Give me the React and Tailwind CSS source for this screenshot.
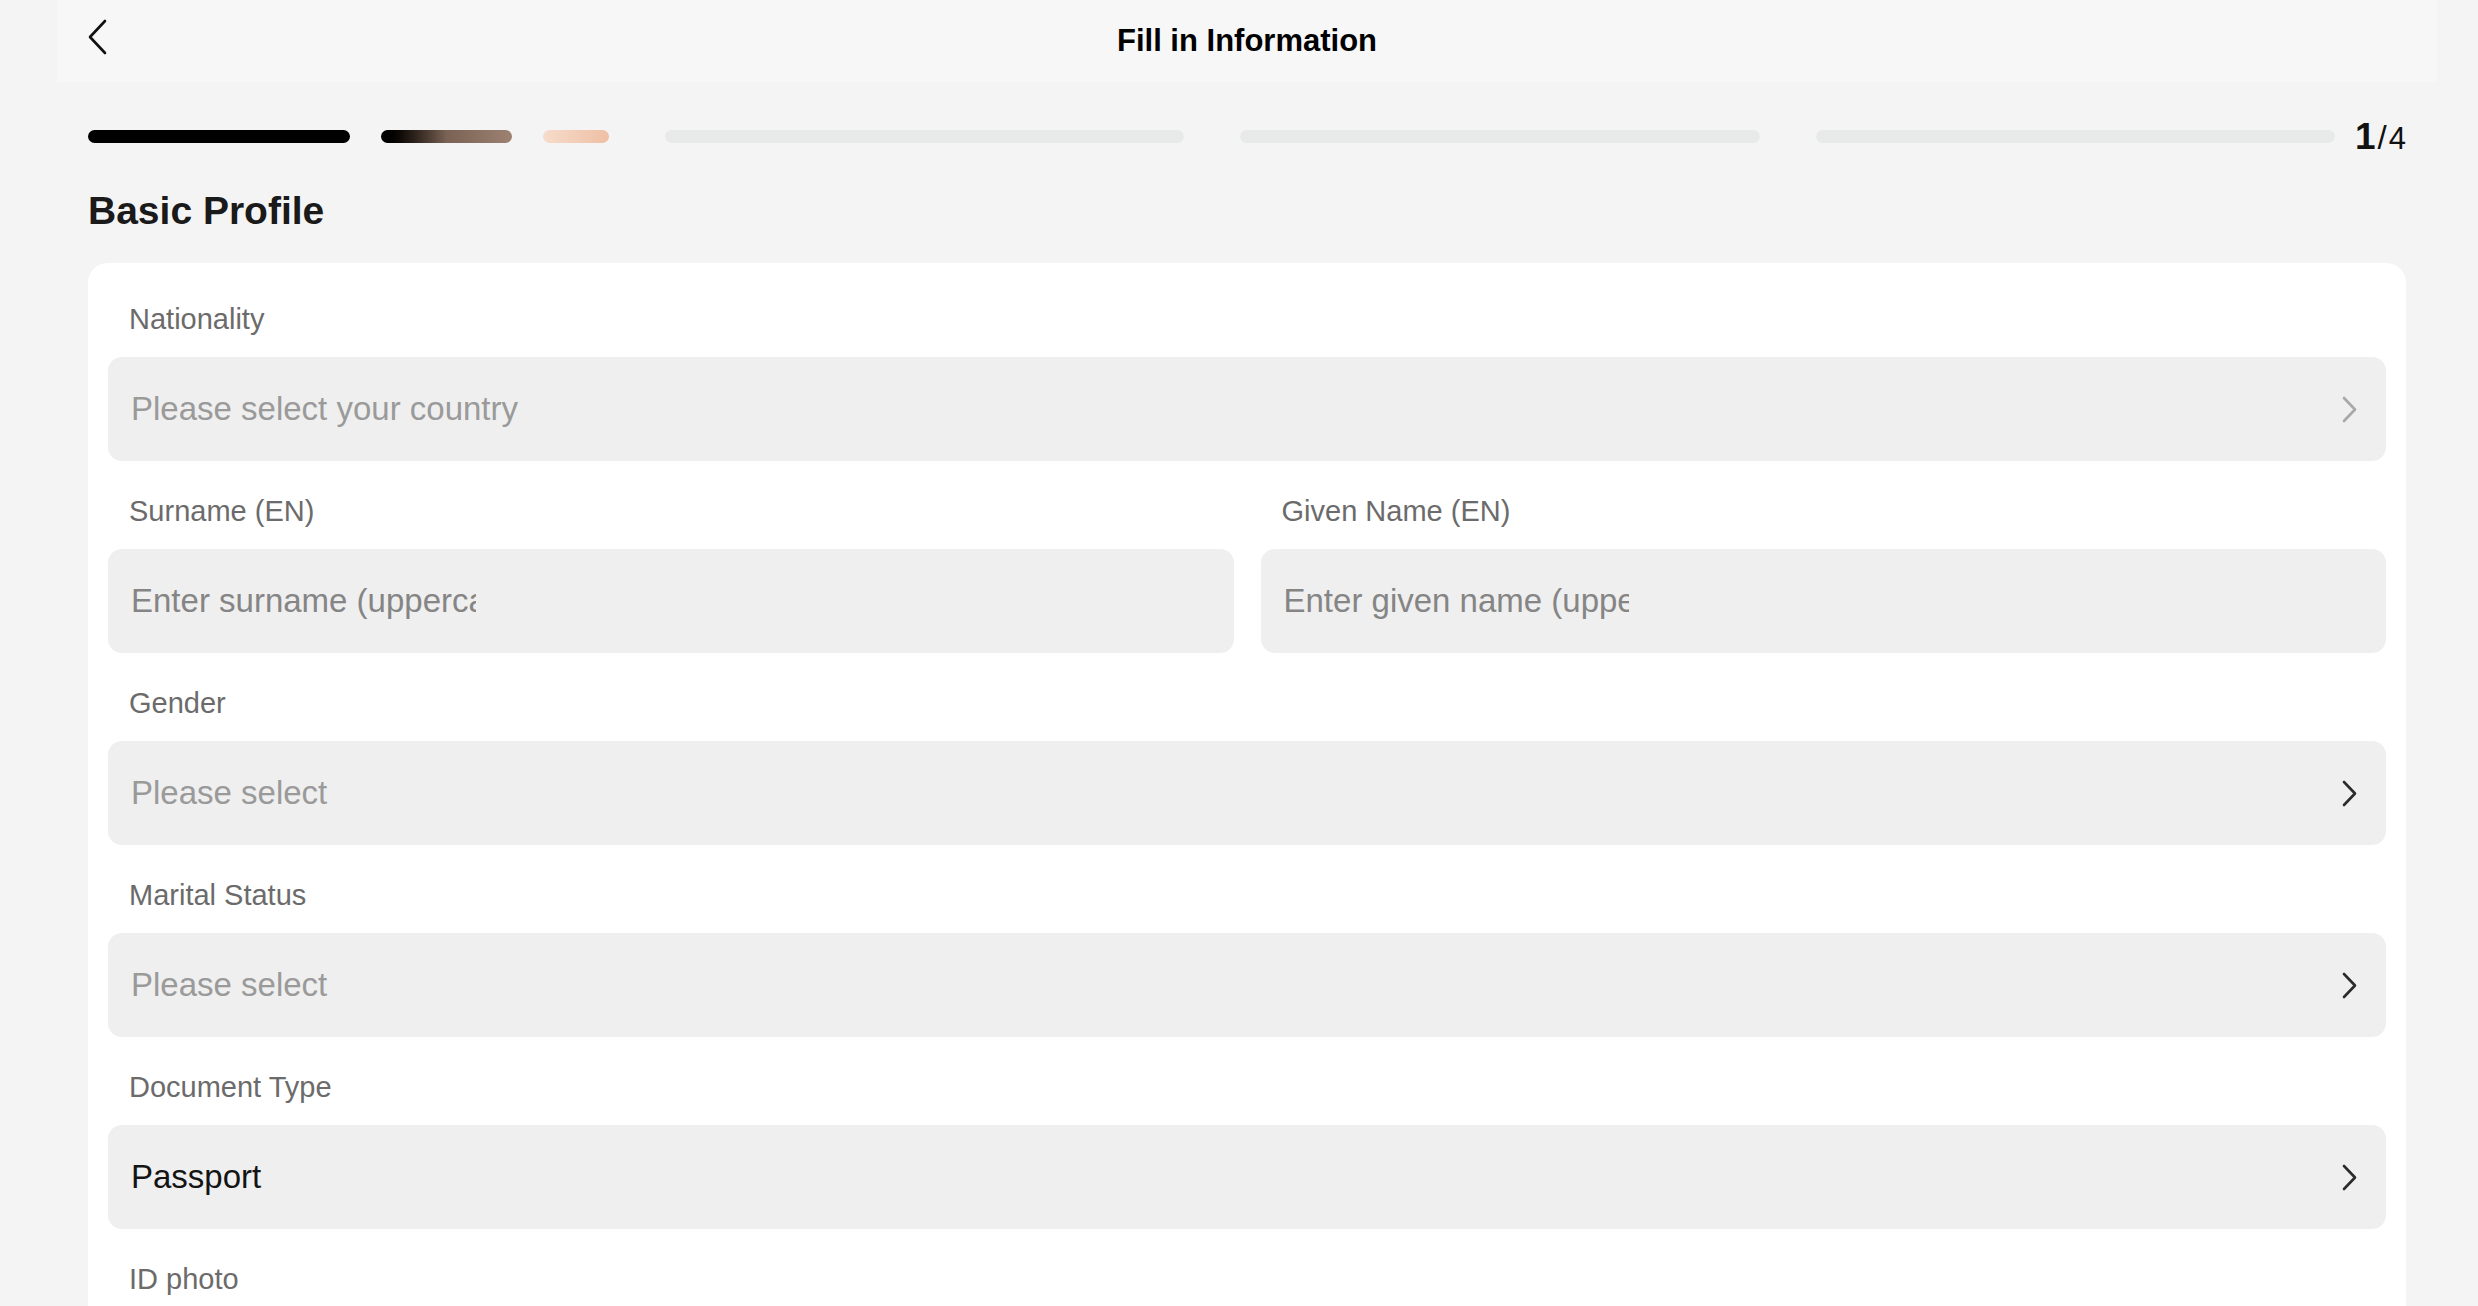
import { useState } from "react";

const FONT = { fontFamily: '"Liberation Sans", Arial, sans-serif' };

// chevrons drawn to match the thin strokes in the design
function BackIcon() {
  return (
    <svg width="20" height="36" viewBox="0 0 20 36" fill="none">
      <path d="M18 2 L3 18 L18 34" stroke="#111" strokeWidth="2.6" strokeLinecap="round" strokeLinejoin="round" />
    </svg>
  );
}

function ChevronRight({ color = "#2b2b2b" }) {
  return (
    <svg width="16" height="27" viewBox="0 0 16 27" fill="none">
      <path d="M2 2 L13 13.5 L2 25" stroke={color} strokeWidth="2.6" strokeLinecap="round" strokeLinejoin="round" />
    </svg>
  );
}

function Label({ children }) {
  return <div className="pl-[21px] text-[29px] leading-[40px] text-[#6b6b6b] mb-[18px]">{children}</div>;
}

function SelectField({ label, value, placeholder, muted }) {
  return (
    <div>
      <Label>{label}</Label>
      <div className="h-[104px] rounded-[14px] bg-[#efefef] flex items-center justify-between pl-[23px] pr-[28px] cursor-pointer">
        <span className={value ? "text-[33px] text-[#141414]" : "text-[33px] text-[#9a9a9a]"}>
          {value || placeholder}
        </span>
        <ChevronRight color={muted ? "#a8a8a8" : "#2b2b2b"} />
      </div>
    </div>
  );
}

function TextField({ label, placeholder }) {
  const [v, setV] = useState("");
  return (
    <div className="flex-1">
      <Label>{label}</Label>
      <div className="h-[104px] rounded-[14px] bg-[#efefef] flex items-center pl-[23px]">
        <input
          value={v}
          onChange={(e) => setV(e.target.value)}
          placeholder={placeholder}
          className="w-[345px] bg-transparent outline-none text-[33px] text-[#141414] placeholder:text-[#858585]"
          style={FONT}
        />
      </div>
    </div>
  );
}

export default function App() {
  return (
    <div className="min-h-screen bg-[#f4f4f4] pl-[57px] pr-[41px]" style={FONT}>
      <header className="relative h-[82px] bg-[#f7f7f7] flex items-center justify-center">
        <button className="absolute left-[30px] top-[19px]">
          <BackIcon />
        </button>
        <h1 className="text-[31px] font-bold text-black">Fill in Information</h1>
      </header>

      <div className="px-[31px]">
        {/* step progress */}
        <div className="mt-[48px] h-[13px] flex items-center gap-[56px]">
          <div className="flex-1 flex gap-[31px] h-[13px]">
            <div className="w-[262px] rounded-full bg-black" />
            <div className="w-[131px] rounded-full bg-linear-to-r from-black via-[#7a6254] to-[#9d8272]" />
            <div className="w-[66px] rounded-full bg-linear-to-r from-[#f6dccb] to-[#efbfa4]" />
          </div>
          <div className="flex-1 h-[13px] rounded-full bg-[#e8eae9]" />
          <div className="flex-1 h-[13px] rounded-full bg-[#e8eae9]" />
          <div className="flex-1 h-[13px] rounded-full bg-[#e8eae9] -mr-[36px]" />
          <div className="flex items-baseline leading-none text-[#111]">
            <span className="text-[37px] font-bold">1</span>
            <span className="text-[33px] px-[2px]">/</span>
            <span className="text-[31px]">4</span>
          </div>
        </div>

        <h2 className="mt-[44px] text-[39px] leading-[48px] font-bold text-[#1a1a1a]">Basic Profile</h2>

        <div className="mt-[28px] bg-white rounded-[20px] px-[20px] pt-[36px] pb-[40px] flex flex-col gap-[30px]">
          <SelectField label="Nationality" placeholder="Please select your country" muted />
          <div className="flex gap-[27px]">
            <TextField label="Surname (EN)" placeholder="Enter surname (uppercase)" />
            <TextField label="Given Name (EN)" placeholder="Enter given name (uppercase)" />
          </div>
          <SelectField label="Gender" placeholder="Please select" />
          <SelectField label="Marital Status" placeholder="Please select" />
          <SelectField label="Document Type" value="Passport" />
          <div>
            <Label>ID photo</Label>
            <div className="h-[300px] rounded-[14px] bg-[#efefef]" />
          </div>
        </div>
      </div>
    </div>
  );
}
